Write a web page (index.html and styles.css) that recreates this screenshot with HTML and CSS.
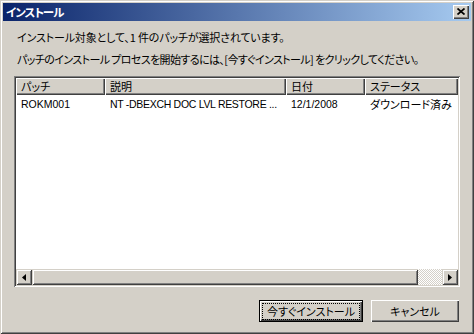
FILE: index.html
```html
<!DOCTYPE html>
<html lang="ja">
<head>
<meta charset="utf-8">
<link rel="stylesheet" href="styles.css">
</head>
<body>
<div class="window">
  <div class="titlebar">
    <span class="title">インストール</span>
    <span class="close"><svg width="8" height="7" viewBox="0 0 8 7"><path d="M0.5 0.5 L7.5 6.5 M7.5 0.5 L0.5 6.5" stroke="#000" stroke-width="1.7" fill="none"/></svg></span>
  </div>
  <div class="content">
    <p class="msg msg-count">インストール対象として、1 件のパッチが選択されています。</p>
    <p class="msg msg-hint">パッチのインストール プロセスを開始するには、[今すぐインストール] をクリックしてください。</p>
    <div class="list">
      <div class="header">
        <div class="hcell c1">パッチ</div>
        <div class="hcell c2">説明</div>
        <div class="hcell c3">日付</div>
        <div class="hcell c4">ステータス</div>
      </div>
      <div class="rows">
        <div class="row">
          <div class="cell c1">ROKM001</div>
          <div class="cell c2">NT -DBEXCH DOC LVL RESTORE ...</div>
          <div class="cell c3">12/1/2008</div>
          <div class="cell c4">ダウンロード済み</div>
        </div>
      </div>
      <div class="hscroll">
        <div class="sbtn"><svg width="4" height="7" viewBox="0 0 4 7"><path d="M4 0 L0 3.5 L4 7 Z" fill="#000"/></svg></div>
        <div class="thumb"></div>
        <div class="track"></div>
        <div class="sbtn"><svg width="4" height="7" viewBox="0 0 4 7"><path d="M0 0 L4 3.5 L0 7 Z" fill="#000"/></svg></div>
      </div>
    </div>
    <div class="buttons">
      <div class="btn default"><span class="focus">今すぐインストール</span></div>
      <div class="btn">キャンセル</div>
    </div>
  </div>
</div>
</body>
</html>
```
FILE: styles.css
```css
html, body {
  margin: 0;
  padding: 0;
  background: #d4d0c8;
}
body {
  font-family: "Noto Sans CJK JP", "DejaVu Sans", sans-serif;
  font-size: 11px;
  font-feature-settings: "palt";
  color: #000;
}
.window {
  width: 474px;
  height: 334px;
  box-sizing: border-box;
  padding: 3px;
  background: #d4d0c8;
  box-shadow: inset 1px 1px 0 #d4d0c8, inset -1px -1px 0 #404040, inset 2px 2px 0 #fff, inset -2px -2px 0 #808080;
  display: flex;
  flex-direction: column;
}
.titlebar {
  height: 18px;
  background: linear-gradient(to right, #0a246a, #a6caf0);
  display: flex;
  align-items: center;
  justify-content: space-between;
  padding-left: 3px;
  padding-right: 2px;
}
.title {
  color: #fff;
  font-weight: bold;
  font-size: 11.5px;
  letter-spacing: -1px;
  line-height: 18px;
}
.close {
  width: 16px;
  height: 14px;
  box-sizing: border-box;
  background: #d4d0c8;
  box-shadow: inset 1px 1px 0 #fff, inset -1px -1px 0 #404040, inset -2px -2px 0 #808080;
  display: flex;
  align-items: center;
  justify-content: center;
  padding-bottom: 1px;
}
.content {
  flex: 1;
  display: flex;
  flex-direction: column;
  padding: 8px 11px 0 11px;
}
.msg {
  margin: 0 0 6px 3px;
  line-height: 16px;
  height: 16px;
  white-space: nowrap;
}
.msg-count {
  letter-spacing: -0.15px;
}
.msg-hint {
  letter-spacing: -0.6px;
}
.list {
  margin-top: 3px;
  height: 211px;
  box-sizing: border-box;
  background: #fff;
  box-shadow: inset 1px 1px 0 #808080, inset -1px -1px 0 #fff, inset 2px 2px 0 #404040, inset -2px -2px 0 #d4d0c8;
  padding: 2px;
  display: flex;
  flex-direction: column;
  overflow: hidden;
}
.header {
  display: flex;
  height: 17px;
  flex-shrink: 0;
  background: #d4d0c8;
}
.hcell {
  box-sizing: border-box;
  height: 17px;
  line-height: 16px;
  padding-left: 5px;
  box-shadow: inset 1px 1px 0 #fff, inset -1px -1px 0 #404040, inset -2px -2px 0 #808080;
  white-space: nowrap;
  overflow: hidden;
}
.c1 { width: 89px; }
.c2 { width: 181px; }
.c3 { width: 79px; }
.c4 { flex: 1; }
.rows {
  flex: 1;
}
.row {
  display: flex;
  height: 16px;
  line-height: 16px;
  margin-top: 1px;
}
.cell {
  box-sizing: border-box;
  padding-left: 5px;
  white-space: nowrap;
  overflow: hidden;
}
.row .c1, .row .c2, .row .c3 {
  font-family: "Liberation Sans", sans-serif;
  font-size: 10.5px;
}
.row .c2 {
  letter-spacing: -0.3px;
}
.hscroll {
  height: 16px;
  display: flex;
  flex-shrink: 0;
}
.sbtn, .thumb {
  box-sizing: border-box;
  height: 16px;
  background: #d4d0c8;
  box-shadow: inset 1px 1px 0 #d4d0c8, inset -1px -1px 0 #404040, inset 2px 2px 0 #fff, inset -2px -2px 0 #808080;
}
.sbtn {
  width: 16px;
  display: flex;
  align-items: center;
  justify-content: center;
}
.thumb {
  width: 386px;
}
.track {
  flex: 1;
  background-color: #fff;
  background-image: repeating-conic-gradient(#d4d0c8 0 25%, #fff 0 50%);
  background-size: 2px 2px;
}
.buttons {
  display: flex;
  justify-content: flex-end;
  gap: 8px;
  margin-top: 13px;
  padding-right: 1px;
}
.btn {
  box-sizing: border-box;
  height: 22px;
  width: 88px;
  display: flex;
  align-items: center;
  justify-content: center;
  background: #d4d0c8;
  box-shadow: inset 1px 1px 0 #fff, inset -1px -1px 0 #404040, inset -2px -2px 0 #808080;
  line-height: 14px;
}
.btn.default {
  width: 104px;
  box-shadow: inset 0 0 0 1px #000, inset 2px 2px 0 #fff, inset -2px -2px 0 #404040, inset -3px -3px 0 #808080;
}
.focus {
  border: 1px dotted #000;
  padding: 1px 4px;
  line-height: 13px;
}
```
